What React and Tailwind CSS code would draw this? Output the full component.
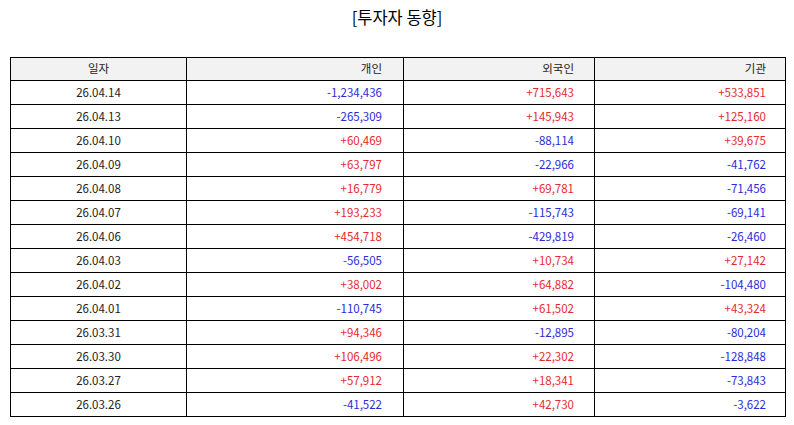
import React from "react";

const rows = [
  ["26.04.14", "-1,234,436", "+715,643", "+533,851"],
  ["26.04.13", "-265,309", "+145,943", "+125,160"],
  ["26.04.10", "+60,469", "-88,114", "+39,675"],
  ["26.04.09", "+63,797", "-22,966", "-41,762"],
  ["26.04.08", "+16,779", "+69,781", "-71,456"],
  ["26.04.07", "+193,233", "-115,743", "-69,141"],
  ["26.04.06", "+454,718", "-429,819", "-26,460"],
  ["26.04.03", "-56,505", "+10,734", "+27,142"],
  ["26.04.02", "+38,002", "+64,882", "-104,480"],
  ["26.04.01", "-110,745", "+61,502", "+43,324"],
  ["26.03.31", "+94,346", "-12,895", "-80,204"],
  ["26.03.30", "+106,496", "+22,302", "-128,848"],
  ["26.03.27", "+57,912", "+18,341", "-73,843"],
  ["26.03.26", "-41,522", "+42,730", "-3,622"],
];

const tone = (v) => (v.startsWith("-") ? "text-[#2b2bd6]" : "text-[#e42b2b]");

export default function App() {
  return (
    <div
      className="w-[794px] h-[425px] bg-white text-[#222]"
      style={{ fontFamily: '"Noto Sans CJK KR", "Noto Sans", sans-serif' }}
    >
      <h1 className="pt-[5px] h-[57px] text-center text-[16.5px] leading-[24px] text-black">
        [투자자 동향]
      </h1>
      <table className="ml-[10px] w-[775px] border-collapse table-fixed text-[11.5px]">
        <colgroup>
          <col className="w-[176px]" />
          <col className="w-[217px]" />
          <col className="w-[191px]" />
          <col className="w-[191px]" />
        </colgroup>
        <thead>
          <tr className="h-[23px] bg-[#f2f2f2]">
            <th className="border-[1.5px] border-black font-normal text-center">일자</th>
            <th className="border-[1.5px] border-black font-normal text-right pr-[21px]">개인</th>
            <th className="border-[1.5px] border-black font-normal text-right pr-[20px]">외국인</th>
            <th className="border-[1.5px] border-black font-normal text-right pr-[19px]">기관</th>
          </tr>
        </thead>
        <tbody>
          {rows.map((r) => (
            <tr key={r[0]} className="h-[24px]">
              <td className="border-[1.5px] border-black text-center">{r[0]}</td>
              <td className={`border-[1.5px] border-black text-right pr-[21px] ${tone(r[1])}`}>{r[1]}</td>
              <td className={`border-[1.5px] border-black text-right pr-[20px] ${tone(r[2])}`}>{r[2]}</td>
              <td className={`border-[1.5px] border-black text-right pr-[19px] ${tone(r[3])}`}>{r[3]}</td>
            </tr>
          ))}
        </tbody>
      </table>
    </div>
  );
}
